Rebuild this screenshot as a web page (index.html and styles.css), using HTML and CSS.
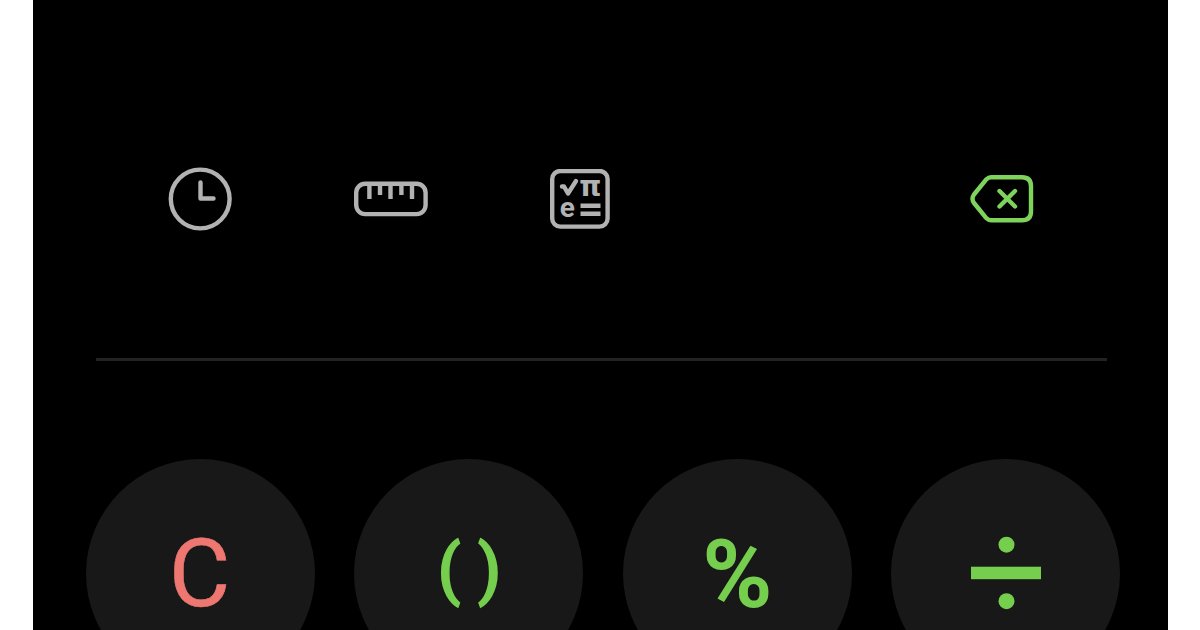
FILE: index.html
```html
<!DOCTYPE html>
<html lang="en">

<head>
    <meta charset="UTF-8">
    <title>Calculator</title>
    <link rel="stylesheet" href="styles.css">
</head>

<body>
    <div class="calculator">
        <div class="toolbar">
            <button class="tool" aria-label="History">
                <svg width="64" height="64" viewBox="0 0 64 64">
                    <circle cx="32.2" cy="32" r="29.4" />
                    <path d="M32.5 15.5V31.5H45.5" />
                </svg>
            </button>
            <button class="tool ruler" aria-label="Unit converter">
                <svg width="74" height="36" viewBox="0 0 74 36">
                    <rect x="2.2" y="2.7" width="69.4" height="30.4" rx="9" />
                    <path class="ticks" d="M15.4 3V18M26 3V14M36.5 3V18M47.4 3V14M58 3V18" />
                </svg>
            </button>
            <button class="tool scientific" aria-label="Scientific mode">
                <svg width="60" height="60" viewBox="0 0 60 60">
                    <rect x="2.2" y="2" width="55.4" height="55.6" rx="8" />
                    <path d="M12 17.5H14L18 24.5L26 12" />
                    <path class="equals" d="M30.5 36.7H50.5M30.5 44.8H50.5" />
                    <text class="pi" x="29.2" y="27">π</text>
                    <text class="e" x="9.8" y="47.5">e</text>
                </svg>
            </button>
            <button class="tool backspace" aria-label="Backspace">
                <svg width="64" height="48" viewBox="0 0 64 48">
                    <path d="M21 2.2H52Q61 2.2 61 11V36.5Q61 45.3 52 45.3H21Q18.5 45.3 16.5 43.3L4 28Q1 23.7 4 19.5L16.5 4.2Q18.5 2.2 21 2.2Z" />
                    <path d="M29.5 16L45 31.5M45 16L29.5 31.5" />
                </svg>
            </button>
        </div>

        <div class="keys">
            <button class="key clear">C</button>
            <button class="key brackets">()</button>
            <button class="key percent">%</button>
            <button class="key divide" aria-label="Divide">
                <svg width="70" height="74" viewBox="0 0 70 74">
                    <circle cx="35.5" cy="8.7" r="8" />
                    <rect x="0" y="30.7" width="70" height="12.5" />
                    <circle cx="35.5" cy="65.2" r="8" />
                </svg>
            </button>
        </div>
    </div>
</body>

</html>
```

FILE: styles.css
```css
body {
    margin: 0;
    height: 630px;
    overflow: hidden;
    background-color: #fff;
    font-family: Roboto, sans-serif;
}

.calculator {
    box-sizing: border-box;
    width: 1135px;
    height: 630px;
    margin-left: 33px;
    background-color: #000;
    overflow: hidden;
}

button {
    display: flex;
    align-items: center;
    justify-content: center;
    flex-shrink: 0;
    margin: 0;
    padding: 0;
    border: none;
    background: none;
    cursor: pointer;
}

.toolbar {
    box-sizing: border-box;
    display: flex;
    align-items: center;
    height: 361px;
    margin: 0 61px 0 63px;
    padding: 40px 73px 0 72px;
    border-bottom: 3px solid #232323;
}

.tool svg {
    fill: none;
    stroke: #b2b2b2;
    stroke-width: 4.4;
    stroke-linecap: round;
    stroke-linejoin: round;
}

.ruler {
    margin-left: 122px;
}

.scientific {
    margin-left: 122px;
}

.backspace {
    margin-left: auto;
}

.tool .ticks {
    stroke-linecap: butt;
}

.tool .equals {
    stroke-linecap: butt;
}

.tool text {
    fill: #b2b2b2;
    stroke: none;
    font-weight: 700;
}

.tool .pi {
    font-family: "DejaVu Sans", sans-serif;
    font-size: 28px;
}

.tool .e {
    font-family: Roboto, sans-serif;
    font-size: 28px;
}

.backspace svg {
    stroke: #7ed35c;
}

.keys {
    display: flex;
    gap: 39.4px;
    margin: 97.5px 0 0 53px;
}

.key {
    box-sizing: border-box;
    width: 229px;
    height: 229px;
    padding-top: 2px;
    border-radius: 50%;
    background-color: #181818;
    color: #75ce4e;
    font-family: Roboto, sans-serif;
    font-size: 95px;
    line-height: 1;
}

.clear {
    padding-right: 2px;
    color: #ee7771;
    font-size: 94px;
    -webkit-text-stroke: 0.6px #ee7771;
}

.brackets {
    padding: 0 0 7px 18px;
    font-size: 67px;
    font-weight: 500;
    letter-spacing: 17px;
    -webkit-text-stroke: 1.5px #75ce4e;
}

.percent {
    font-weight: 700;
}

.divide {
    padding-top: 0;
}

.divide svg {
    fill: #75ce4e;
}
```
